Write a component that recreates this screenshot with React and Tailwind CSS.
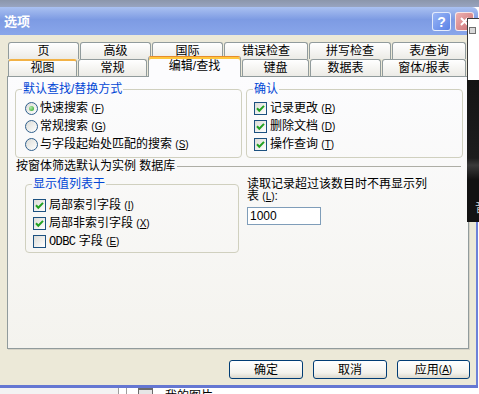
import React from 'react';

const Mn = ({ k }) => (
  <span className="text-[10px] font-['Liberation_Sans',sans-serif]">
    (<span className="underline">{k}</span>)
  </span>
);

const Radio = ({ checked, children }) => (
  <div className="flex items-center gap-[2px] h-[18px]">
    <span className="w-[13px] h-[13px] rounded-full border border-[#2f5f8c] bg-[linear-gradient(135deg,#dcdcd7,#ffffff)] flex items-center justify-center">
      {checked && <span className="w-[5px] h-[5px] rounded-full bg-[radial-gradient(circle_at_35%_35%,#b4eaa8,#21a121)]" />}
    </span>
    <span>{children}</span>
  </div>
);

const Check = ({ checked, children }) => (
  <div className="flex items-center gap-[3px] h-[18px]">
    <span className="w-[13px] h-[13px] border border-[#1c5180] bg-[linear-gradient(135deg,#dcdcd7,#ffffff)] flex items-center justify-center">
      {checked && (
        <svg width="11" height="11" viewBox="0 0 11 11">
          <path d="M2 5.3 L4.3 7.7 L9 2.9" fill="none" stroke="#21a121" strokeWidth="2" />
        </svg>
      )}
    </span>
    <span>{children}</span>
  </div>
);

const Group = ({ title, className, children }) => (
  <fieldset className={`border border-[#d0d0bf] rounded-[4px] ${className}`}>
    <legend className="ml-[6px] px-[1px] text-[#0046d5] leading-[12px]">{title}</legend>
    {children}
  </fieldset>
);

const tabBase =
  'h-[17px] border-t border-x border-[#919b9c] rounded-t-[3px] bg-[linear-gradient(to_bottom,#ffffff,#ecebe6)] text-center';

const row1 = [
  ['页', 'w-[71px]'],
  ['高级', 'w-[71px]'],
  ['国际', 'w-[71px]'],
  ['错误检查', 'w-[84px]'],
  ['拼写检查', 'w-[82px]'],
  ['表/查询', 'w-[74px]'],
];

const Btn = ({ w, children }) => (
  <div
    className={`${w} h-[19px] rounded-[3px] border border-[#003c74] bg-[linear-gradient(to_bottom,#ffffff,#f3f2ec_70%,#dcd8cc)] flex items-center justify-center`}
  >
    {children}
  </div>
);

export default function App() {
  return (
    <div className="w-[479px] h-[394px] relative overflow-hidden bg-white font-['Liberation_Sans','Noto_Sans_CJK_SC',sans-serif] text-[12px] leading-[12px] text-black">
      <div className="h-[7px] bg-[linear-gradient(to_bottom,#8b96ab,#98a4c0)]" />

      <div className="flex">
        <div className="w-[478px]">
          {/* title bar */}
          <div className="h-[28px] flex items-start justify-between pl-[4px] pr-[4px] pt-[5px] rounded-tr-[6px] bg-[linear-gradient(to_bottom,#aac1f1,#7d9be3_45%,#89a6ea)]">
            <span className="text-white font-bold text-[13px] leading-[19px]">选项</span>
            <div className="flex gap-[4px]">
              <div className="w-[19px] h-[19px] rounded-[3px] border border-white/80 bg-[linear-gradient(135deg,#9ab6f6,#5a82e6)] flex items-center justify-center text-white font-bold text-[14px] leading-[14px]">
                ?
              </div>
              <div className="w-[19px] h-[19px] rounded-[3px] border border-white/80 bg-[linear-gradient(135deg,#eeb0b0,#c86f74)] flex items-center justify-center">
                <svg width="11" height="11" viewBox="0 0 11 11">
                  <path d="M2 2 L9 9 M9 2 L2 9" stroke="#fff" strokeWidth="2" />
                </svg>
              </div>
            </div>
          </div>

          <div className="flex">
            <div className="w-[476px] h-[350px] bg-[#ece9d8] pt-[7px]">
              {/* tabs row 1 */}
              <div className="flex gap-px ml-[8px] h-[17px]">
                {row1.map(([t, w]) => (
                  <div key={t} className={`${w} ${tabBase} pt-[2px]`}>
                    {t}
                  </div>
                ))}
              </div>
              {/* tabs row 2 */}
              <div className="flex items-end gap-px ml-[8px] h-[17px]">
                <div className="w-[69px] h-[17px] border-t-2 border-x border-[#919b9c] border-t-[#f2b246] rounded-t-[3px] bg-[linear-gradient(to_bottom,#ffffff,#ecebe6)] text-center pt-[1px]">
                  视图
                </div>
                <div className={`w-[69px] ${tabBase} pt-[2px]`}>常规</div>
                <div className="w-[93px] h-[21px] -mb-px relative z-10 border-t border-x border-[#919b9c] border-t-[#e68b2c] shadow-[inset_0_2px_0_#ffc73c] rounded-t-[3px] bg-[#fcfcfe] text-center pt-[3px]">
                  编辑/查找
                </div>
                <div className={`w-[67px] ${tabBase} pt-[2px]`}>键盘</div>
                <div className={`w-[71px] ${tabBase} pt-[2px]`}>数据表</div>
                <div className={`w-[84px] ${tabBase} pt-[2px]`}>窗体/报表</div>
              </div>

              {/* tab page */}
              <div className="ml-[7px] w-[462px] h-[273px] border border-[#919b9c] bg-[linear-gradient(to_bottom,#fcfcfe,#f4f3ee)] shadow-[1px_1px_0_#d6d3c6] pt-[6px] pl-[7px]">
                <div className="flex gap-[4px]">
                  <Group title="默认查找/替换方式" className="w-[227px]">
                    <div className="pt-[4px] pb-[4px] pl-[9px]">
                      <Radio checked>
                        快速搜索 <Mn k="F" />
                      </Radio>
                      <Radio>
                        常规搜索 <Mn k="G" />
                      </Radio>
                      <Radio>
                        与字段起始处匹配的搜索 <Mn k="S" />
                      </Radio>
                    </div>
                  </Group>
                  <Group title="确认" className="w-[217px]">
                    <div className="pt-[4px] pb-[4px] pl-[7px]">
                      <Check checked>
                        记录更改 <Mn k="R" />
                      </Check>
                      <Check checked>
                        删除文档 <Mn k="D" />
                      </Check>
                      <Check checked>
                        操作查询 <Mn k="T" />
                      </Check>
                    </div>
                  </Group>
                </div>

                <div className="mt-[2px] ml-[1px] w-[445px] flex items-center">
                  <span>按窗体筛选默认为实例 数据库</span>
                  <div className="flex-1 ml-[2px] h-px bg-[#aeaea6]" />
                </div>

                <div className="mt-[6px] pl-[10px] flex items-start">
                  <Group title="显示值列表于" className="w-[214px]">
                    <div className="pt-[6px] pb-[2px] pl-[7px]">
                      <Check checked>
                        局部索引字段 <Mn k="I" />
                      </Check>
                      <Check checked>
                        局部非索引字段 <Mn k="X" />
                      </Check>
                      <Check>
                        <span className="font-['Liberation_Mono',monospace] text-[12px] tracking-[-0.6px]">ODBC</span> 字段 <Mn k="E" />
                      </Check>
                    </div>
                  </Group>
                  <div className="ml-[8px]">
                    <div className="w-[185px] leading-[12px]">
                      读取记录超过该数目时不再显示列表 <Mn k="L" />:
                    </div>
                    <div className="mt-[4px] w-[74px] h-[18px] border border-[#7f9db9] bg-white pl-[2px] flex items-center">
                      1000
                    </div>
                  </div>
                </div>
              </div>

              {/* buttons */}
              <div className="flex gap-[10px] ml-[229px] mt-[11px]">
                <Btn w="w-[74px]">确定</Btn>
                <Btn w="w-[74px]">取消</Btn>
                <Btn w="w-[73px]">
                  应用 <Mn k="A" />
                </Btn>
              </div>
            </div>
            <div className="w-[2px] bg-[#6d81d8]" />
          </div>
          <div className="h-[3px] bg-[#6577d2]" />
        </div>
        <div className="flex-1 bg-white" />
      </div>

      {/* window behind, bottom strip */}
      <div className="h-[6px] flex overflow-hidden bg-white">
        <div className="w-[118px] bg-[#f3f3f3]" />
        <div className="w-px bg-[#9d9d9d]" />
        <div className="w-[7px]" />
        <div className="w-px bg-[#9d9d9d]" />
        <div className="w-[11px]" />
        <div className="w-[15px] border-t-2 border-x border-[#6b6b6b] bg-[#e6e6e6]" />
        <div className="w-[12px]" />
        <div className="pt-[2px] leading-[12px]">我的图片</div>
      </div>

      {/* another window overlapping the right edge */}
      <div className="absolute left-[467px] top-[18px] w-[12px] h-[204px] flex flex-col">
        <div className="h-[62px] bg-white border-l border-t border-[#3a3a3a] pl-[1px] pt-[8px]">
          <div className="w-[7px] h-[7px] border border-[#707070] bg-[#d8d8d8]" />
        </div>
        <div className="flex-1 bg-[linear-gradient(to_bottom,#141414,#1d1d1d_55%,#3a3a3a_60%,#121212_70%)] pl-[8px] pt-[122px] text-[#d6d6d6] overflow-hidden whitespace-nowrap">
          音
        </div>
      </div>
    </div>
  );
}
